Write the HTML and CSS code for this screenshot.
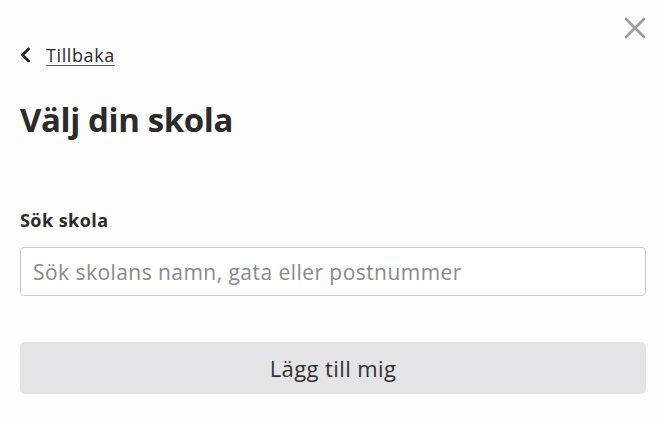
FILE: index.html
```html
<!DOCTYPE html>
<html>
    <head>
        <title>Välj din skola</title>
        <link rel="stylesheet" href="styles.css">
    </head>
    <body>
        <div class="sheet">
            <div class="top-bar">
                <a class="back" href="#">
                    <svg class="back-icon" width="10" height="16" viewBox="0 0 10 16">
                        <path d="M8.5 2 L2.5 8 L8.5 14" fill="none" stroke="#222" stroke-width="2.8" stroke-linecap="round" stroke-linejoin="round"/>
                    </svg>
                    <span>Tillbaka</span>
                </a>
                <button class="close" aria-label="Stäng">
                    <svg width="22" height="22" viewBox="0 0 22 22">
                        <path d="M2 2 L20 20 M20 2 L2 20" fill="none" stroke="#9c9c9c" stroke-width="2.6" stroke-linecap="round"/>
                    </svg>
                </button>
            </div>

            <h1 class="title">Välj din skola</h1>

            <label class="field-label" for="school">Sök skola</label>
            <input type="text" id="school" class="search" placeholder="Sök skolans namn, gata eller postnummer">

            <button class="add">Lägg till mig</button>
        </div>
    </body>
</html>
```

FILE: styles.css
```css
body {
    margin: 0;
    background: #fdfdfd;
    font-family: "Open Sans", Lato, sans-serif;
    color: #2b2b2b;
}
.sheet {
    padding: 16px 16px 0 20px;
    display: flex;
    flex-direction: column;
}
.top-bar {
    display: flex;
    justify-content: space-between;
    align-items: flex-start;
}
.back {
    display: flex;
    align-items: center;
    gap: 16px;
    margin-top: 27px;
    color: #2b2b2b;
    font-size: 18px;
    letter-spacing: 0.6px;
    text-decoration: underline;
    text-underline-offset: 3px;
    text-decoration-color: #555;
}
.back-icon {
    display: block;
}
.close {
    background: none;
    border: none;
    padding: 0;
    margin: 1px 0 0 0;
    width: 22px;
    height: 22px;
    cursor: pointer;
}
.close svg {
    display: block;
}
.title {
    margin: 33px 0 0 0;
    font-size: 33px;
    font-weight: 700;
    line-height: 40px;
    letter-spacing: -0.4px;
}
.field-label {
    margin-top: 69px;
    font-size: 18px;
    font-weight: 700;
    line-height: 22px;
    letter-spacing: 0.45px;
}
.search {
    margin-top: 16px;
    height: 49px;
    box-sizing: border-box;
    border: 1px solid #cbcbcb;
    border-radius: 4px;
    padding: 0 12px;
    font-family: inherit;
    font-size: 21px;
    letter-spacing: 0.45px;
    color: #2b2b2b;
    background: #fff;
    outline: none;
}
.search::placeholder {
    color: #8a8a8a;
}
.add {
    margin-top: 46px;
    height: 52px;
    border: none;
    border-radius: 5px;
    background: #e4e4e6;
    font-family: inherit;
    font-size: 22px;
    letter-spacing: 0.4px;
    color: #333;
    cursor: pointer;
}
```
